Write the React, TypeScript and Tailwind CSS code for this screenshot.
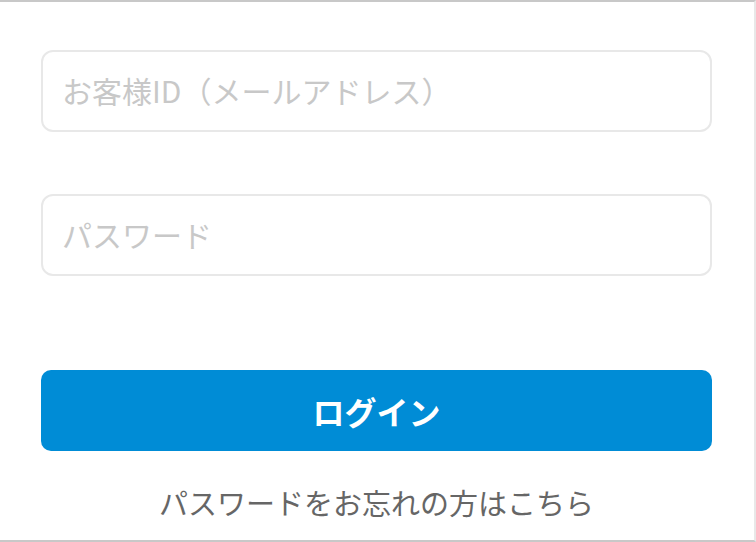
export default function App() {
  return (
    <div
      className="w-[756px] h-[542px] bg-white border-t-2 border-b-2 border-r-2 border-t-[#c8c8c8] border-b-[#c8c8c8] border-r-[#e8e8e8] flex flex-col pl-[41px] pr-[42px] pt-[48px]"
      style={{ fontFamily: '"Noto Sans CJK JP", "Noto Sans", sans-serif' }}
    >
      {/* Inputs */}
      <input
        type="text"
        placeholder="お客様ID（メールアドレス）"
        className="w-full h-[82px] rounded-[12px] border-2 border-[#e8e8e8] pl-[19px] pr-[20px] pb-[3px] text-[30px] text-[#333] placeholder:text-[#c8c8c8] outline-none"
      />
      <input
        type="password"
        placeholder="パスワード"
        className="w-full h-[82px] mt-[62px] rounded-[12px] border-2 border-[#e8e8e8] pl-[19px] pr-[20px] pb-[3px] text-[30px] text-[#333] placeholder:text-[#c8c8c8] outline-none"
      />

      {/* Submit */}
      <button className="w-full h-[81px] mt-[94px] rounded-[10px] bg-[#008cd6] text-white text-[32px] font-bold">
        ログイン
      </button>

      <a className="mt-[37px] text-center text-[29px] text-[#666] leading-none">
        パスワードをお忘れの方はこちら
      </a>
    </div>
  );
}
